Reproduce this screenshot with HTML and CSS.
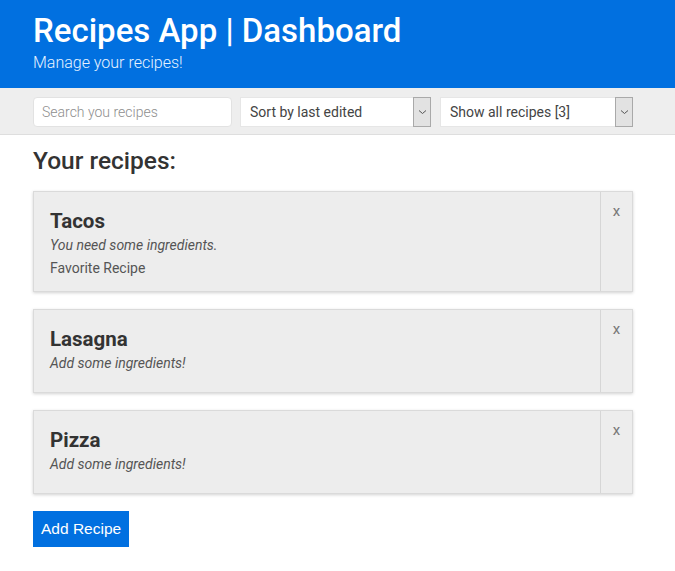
FILE: index.html
```html
<!DOCTYPE html>
<html>
<head>
<meta charset="utf-8">
<link rel="stylesheet" href="styles.css">
</head>
<body>
<header class="header">
  <div class="container">
    <h1 class="title">Recipes App | Dashboard</h1>
    <p class="subtitle">Manage your recipes!</p>
  </div>
</header>
<div class="toolbar">
  <div class="container toolbar-row">
    <input class="search" type="text" placeholder="Search you recipes">
    <div class="select select-sort"><span class="select-text">Sort by last edited</span><span class="select-arrow"><svg width="9" height="6" viewBox="0 0 9 6"><path d="M1 1.5 L4.5 4.5 L8 1.5" fill="none" stroke="#555" stroke-width="1"/></svg></span></div>
    <div class="select select-filter"><span class="select-text">Show all recipes [3]</span><span class="select-arrow"><svg width="9" height="6" viewBox="0 0 9 6"><path d="M1 1.5 L4.5 4.5 L8 1.5" fill="none" stroke="#555" stroke-width="1"/></svg></span></div>
  </div>
</div>
<main class="container main">
  <h2 class="section-title">Your recipes:</h2>
  <div class="card">
    <div class="card-body">
      <h3 class="card-title">Tacos</h3>
      <p class="card-note">You need some ingredients.</p>
      <p class="card-fav">Favorite Recipe</p>
    </div>
    <div class="card-close">x</div>
  </div>
  <div class="card">
    <div class="card-body">
      <h3 class="card-title">Lasagna</h3>
      <p class="card-note">Add some ingredients!</p>
    </div>
    <div class="card-close">x</div>
  </div>
  <div class="card">
    <div class="card-body">
      <h3 class="card-title">Pizza</h3>
      <p class="card-note">Add some ingredients!</p>
    </div>
    <div class="card-close">x</div>
  </div>
  <button class="add-btn">Add Recipe</button>
</main>
</body>
</html>
```

FILE: styles.css
```css
* { box-sizing: border-box; }
html, body { margin: 0; padding: 0; background: #fff; }
body { font-family: Roboto, "Liberation Sans", sans-serif; color: #333; }
.container { width: 600px; margin-left: 33px; }
.header { background: #0170e0; height: 88px; padding-top: 11px; }
.title { margin: 0; font-size: 33px; font-weight: 500; color: #fff; line-height: 40px; letter-spacing: 0; }
.subtitle { margin: 2px 0 0; font-size: 16px; font-weight: 300; color: #e6f2ff; line-height: 20px; }
.toolbar { background: #eeeeee; height: 47px; border-bottom: 1px solid #dedede; padding-top: 9px; }
.toolbar-row { display: flex; }
.search { width: 199px; height: 30px; border: 1px solid #e2e2e2; border-radius: 4px; background: #fff; padding: 0 8px; font-family: Roboto, sans-serif; font-size: 14px; font-weight: 300; color: #333; outline: none; margin: 0; }
.search::placeholder { color: #8e8e8e; }
.select { height: 30px; background: #fff; border: 1px solid #e6e6e6; display: flex; align-items: stretch; justify-content: space-between; font-size: 14px; color: #444; }
.select-sort { width: 191px; margin-left: 8px; }
.select-filter { width: 193px; margin-left: 9px; }
.select-text { padding-left: 9px; line-height: 28px; }
.select-arrow { width: 18px; background: #e2e2e2; border: 1px solid #a9a9a9; margin: -1px -1px -1px 0; display: flex; align-items: center; justify-content: center; }
.main { padding-top: 11px; }
.section-title { margin: 0 0 15px; font-size: 24.5px; font-weight: 500; line-height: 30px; color: #333; }
.card { display: flex; background: #ededed; border: 1px solid #dadada; box-shadow: 0 1px 3px rgba(0,0,0,0.18); margin-bottom: 17px; }
.card-body { flex: 1; padding: 17px 16px 14px; }
.card-title { margin: 0 0 4px; font-size: 20.5px; font-weight: 700; line-height: 24px; color: #333; }
.card-note { margin: 0 0 6px; font-size: 14px; font-style: italic; line-height: 17px; color: #555; }
.card-fav { margin: 0; font-size: 14px; line-height: 17px; color: #555; }
.card-close { width: 32px; border-left: 1px solid #d6d6d6; text-align: center; font-size: 15px; color: #777; padding-top: 10px; line-height: 18px; }
.add-btn { display: block; height: 36px; padding: 0 8px; border: none; background: #0170e0; color: #fff; font-family: "Liberation Sans", Arial, sans-serif; font-size: 15.5px; margin: 0; cursor: pointer; }
```
